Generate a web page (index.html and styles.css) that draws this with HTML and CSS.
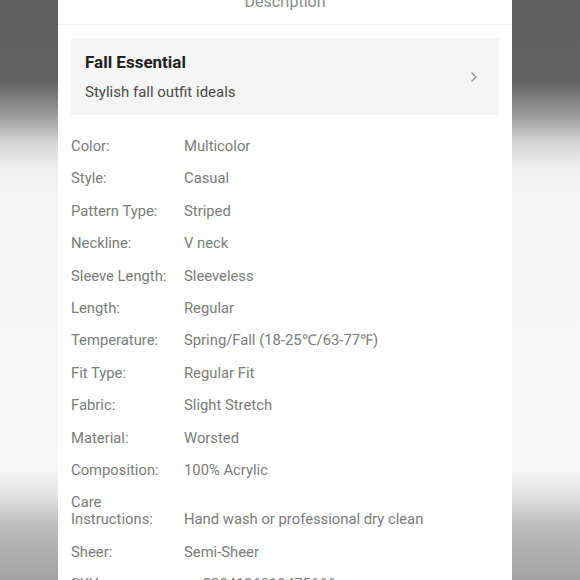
FILE: index.html
```html
<!DOCTYPE html>
<html lang="en">
<head>
<meta charset="utf-8">
<title>Description</title>
<link rel="stylesheet" href="styles.css">
</head>
<body>
<div class="panel">
  <div class="header">Description</div>
  <div class="promo">
    <div class="promo-text">
      <div class="promo-title">Fall Essential</div>
      <div class="promo-sub">Stylish fall outfit ideals</div>
    </div>
    <svg class="chevron" width="8" height="12" viewBox="0 0 8 12"><polyline points="2,2 6,6 2,10" fill="none" stroke="#9a9a9a" stroke-width="1.6" stroke-linecap="round" stroke-linejoin="round"/></svg>
  </div>
  <div class="attrs">
    <div class="row"><div class="label">Color:</div><div class="value">Multicolor</div></div>
    <div class="row"><div class="label">Style:</div><div class="value">Casual</div></div>
    <div class="row"><div class="label">Pattern Type:</div><div class="value">Striped</div></div>
    <div class="row"><div class="label">Neckline:</div><div class="value">V neck</div></div>
    <div class="row"><div class="label">Sleeve Length:</div><div class="value">Sleeveless</div></div>
    <div class="row"><div class="label">Length:</div><div class="value">Regular</div></div>
    <div class="row"><div class="label">Temperature:</div><div class="value">Spring/Fall (18-25℃/63-77℉)</div></div>
    <div class="row"><div class="label">Fit Type:</div><div class="value">Regular Fit</div></div>
    <div class="row"><div class="label">Fabric:</div><div class="value">Slight Stretch</div></div>
    <div class="row"><div class="label">Material:</div><div class="value">Worsted</div></div>
    <div class="row"><div class="label">Composition:</div><div class="value">100% Acrylic</div></div>
    <div class="row"><div class="label">Care Instructions:</div><div class="value">Hand wash or professional dry clean</div></div>
    <div class="row"><div class="label">Sheer:</div><div class="value">Semi-Sheer</div></div>
    <div class="row"><div class="label">SKU:</div><div class="value">sw2304196919475666</div></div>
  </div>
</div>
</body>
</html>
```

FILE: styles.css
```css
html, body {
  margin: 0;
  padding: 0;
  height: 580px;
  overflow: hidden;
}
body {
  font-family: Roboto, "Liberation Sans", Arial, sans-serif;
  background: linear-gradient(to bottom,
    #5e5e5e 0px, #616161 80px, #9a9a9a 115px, #d9d9d9 145px,
    #efefef 170px, #f5f5f5 200px, #f7f7f7 470px, #e2e2e2 495px,
    #bdbdbd 525px, #a2a2a2 580px);
  padding-left: 58px;
}
.panel {
  width: 454px;
  height: 600px;
  background: #ffffff;
  display: flex;
  flex-direction: column;
}
.header {
  margin-top: -8px;
  height: 33px;
  text-align: center;
  font-size: 16px;
  line-height: 19px;
  color: #8a8a8a;
  border-bottom: 1px solid #f3f3f3;
  box-sizing: border-box;
}
.promo {
  margin: 13px 13px 0 13px;
  height: 77px;
  background: #f5f5f5;
  display: flex;
  align-items: center;
  justify-content: space-between;
  padding: 0 21px 0 14px;
}
.promo-text {
  display: flex;
  flex-direction: column;
  gap: 11px;
  padding-top: 1px;
}
.promo-title {
  font-size: 17px;
  line-height: 19px;
  font-weight: 700;
  color: #222222;
}
.promo-sub {
  font-size: 15px;
  line-height: 18px;
  color: #4a4a4a;
}
.chevron {
  display: block;
}
.attrs {
  margin: 23px 13px 0 13px;
  display: flex;
  flex-direction: column;
  gap: 15.4px;
}
.row {
  display: grid;
  grid-template-columns: 113px 1fr;
  align-items: end;
  font-size: 14.8px;
  line-height: 17px;
  color: #7b7b7b;
}
.label {
  padding-right: 8px;
}
```
